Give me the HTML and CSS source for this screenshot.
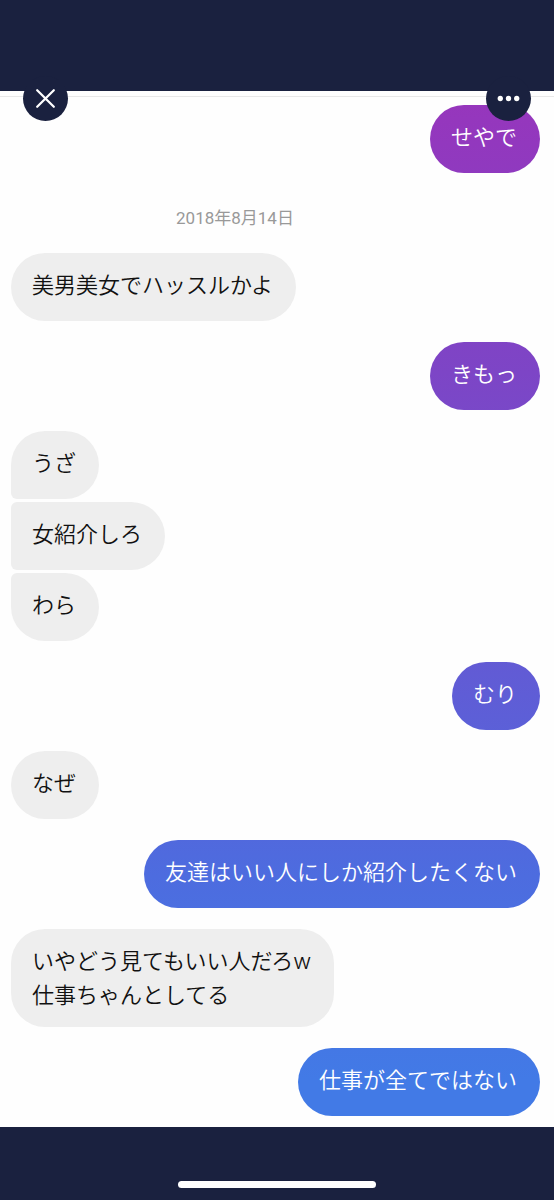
FILE: index.html
```html
<!DOCTYPE html>
<html lang="ja">
<head>
<meta charset="utf-8">
<meta name="viewport" content="width=device-width, initial-scale=1">
<title>メッセージ</title>
<link rel="stylesheet" href="styles.css">
</head>
<body>
<div class="screen">
  <header class="topbar">
    <button class="round-button" type="button" aria-label="閉じる">
      <svg viewBox="0 0 46 46" aria-hidden="true"><path d="M14.5 14.5L31.5 31.5M31.5 14.5L14.5 31.5" fill="none" stroke="#fff" stroke-width="2.3" stroke-linecap="round"/></svg>
    </button>
    <button class="round-button" type="button" aria-label="その他">
      <svg viewBox="0 0 46 46" aria-hidden="true"><g fill="#fff"><circle cx="14.6" cy="23" r="2.7"/><circle cx="23" cy="23" r="2.7"/><circle cx="31.4" cy="23" r="2.7"/></g></svg>
    </button>
  </header>
  <main class="chat">
    <p class="bubble sent">せやで</p>
    <p class="date"><time datetime="2018-08-14">2018年8月14日</time></p>
    <p class="bubble received">美男美女でハッスルかよ</p>
    <p class="bubble sent">きもっ</p>
    <div class="group">
      <p class="bubble received">うざ</p>
      <p class="bubble received">女紹介しろ</p>
      <p class="bubble received">わら</p>
    </div>
    <p class="bubble sent">むり</p>
    <p class="bubble received">なぜ</p>
    <p class="bubble sent">友達はいい人にしか紹介したくない</p>
    <p class="bubble received">いやどう見てもいい人だろw<br>仕事ちゃんとしてる</p>
    <p class="bubble sent">仕事が全てではない</p>
  </main>
  <footer class="bottombar"><span class="home-indicator"></span></footer>
</div>
</body>
</html>
```

FILE: styles.css
```css
* {
  box-sizing: border-box;
}

body {
  margin: 0;
  background: #fefefe;
  color: #111;
  font-family: Inter, "Noto Sans CJK JP", sans-serif;
  font-size: 22px;
  line-height: 34px;
}

p {
  margin: 0;
}

.screen {
  display: flex;
  flex-direction: column;
  min-height: 100vh;
}

.topbar {
  position: relative;
  z-index: 1;
  display: flex;
  justify-content: space-between;
  align-items: flex-start;
  height: 91px;
  padding: 76px 23px 0;
  background: #1a213f;
}

.round-button {
  flex: none;
  width: 45px;
  height: 45px;
  padding: 0;
  border: 0;
  border-radius: 50%;
  background: #1a213f;
}

.round-button svg {
  display: block;
  width: 100%;
  height: 100%;
}

.chat {
  flex: 1;
  display: flex;
  flex-direction: column;
  gap: 21px;
  margin-top: 5px;
  padding: 8px 14px 11px 11px;
  border-top: 1px solid #e8e8e8;
}

.group {
  display: flex;
  flex-direction: column;
  gap: 3px;
}

.bubble {
  min-height: 68px;
  padding: 15px 23px 15px 21px;
  border-radius: 34px;
  font-weight: 350;
}

.received {
  align-self: flex-start;
  background: #eee;
}

.sent {
  align-self: flex-end;
  color: #fff;
  background: linear-gradient(#9736bc 8%, #9238be 12%, #7d45c6 31%, #5f5dd6 58%, #4d6cdf 73%, #427ae6 90%) fixed;
}

.group .bubble:not(:last-child) {
  border-bottom-left-radius: 6px;
}

.group .bubble:not(:first-child) {
  border-top-left-radius: 6px;
}

.date {
  padding: 11px 81px 1px 0;
  color: #999;
  font-family: Roboto, "Noto Sans CJK JP", sans-serif;
  font-size: 17px;
  line-height: 26px;
  text-align: center;
}

.bottombar {
  display: flex;
  justify-content: center;
  align-items: flex-end;
  height: 73px;
  padding-bottom: 12px;
  background: #1a213f;
}

.home-indicator {
  width: 198px;
  height: 7px;
  border-radius: 4px;
  background: #fff;
}
```
